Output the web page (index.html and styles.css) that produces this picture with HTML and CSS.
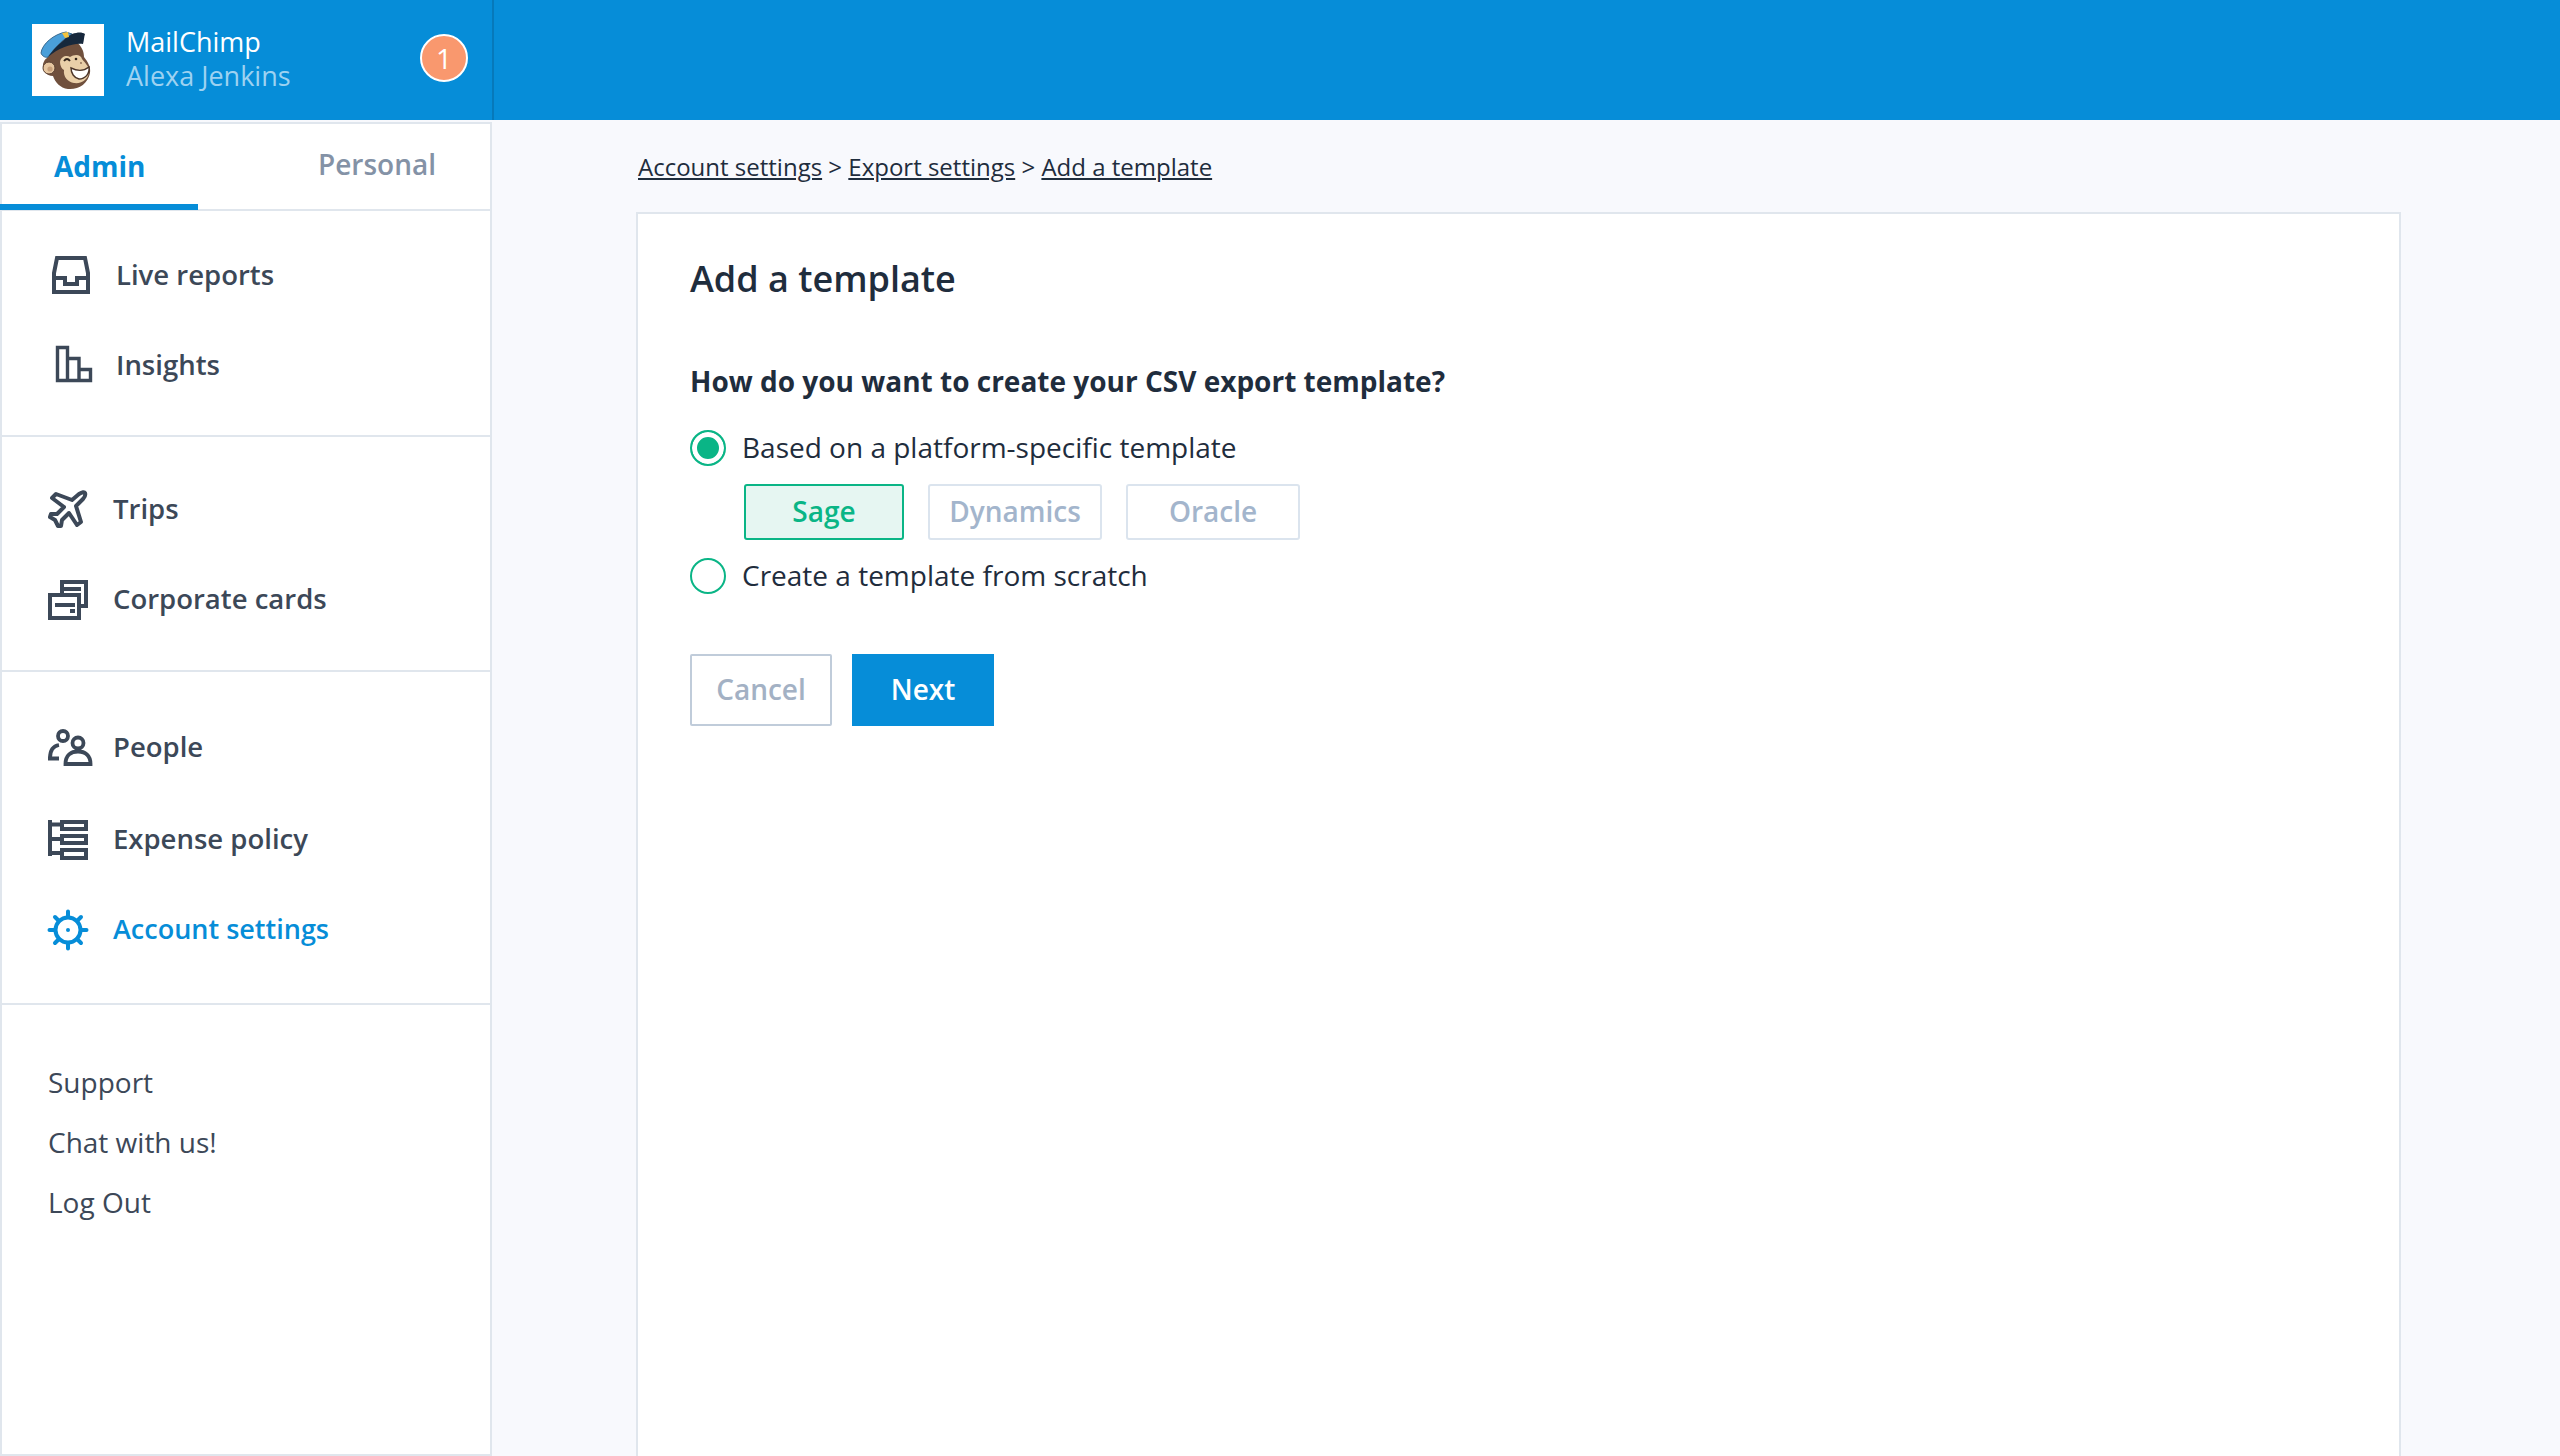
FILE: index.html
```html
<!DOCTYPE html>
<html>
<head>
  <meta charset="UTF-8">
  <title>Add a template</title>
  <link rel="stylesheet" href="styles.css">
</head>
<body>
  <header class="topbar">
    <div class="account">
      <div class="logo">
        <svg viewBox="0 0 72 72" width="72" height="72">
          <!-- head -->
          <path d="M15 34 C16 24 30 16 44 18 C50 22 52 28 52 33 C56 38 59 43 58 49 C56 60 46 66 36 65 C28 64 23 58 21 52 C14 52 10 46 11 40 C12 37 13 35 15 34 Z" fill="#70503d"/>
          <!-- ear -->
          <circle cx="17" cy="44" r="6" fill="#e6c6a0" stroke="#5b4132" stroke-width="1"/>
          <circle cx="18" cy="45" r="2.6" fill="#c79f7a"/>
          <!-- face -->
          <path d="M28 38 C29 32 35 31 38 33 C42 30 49 30 50 35 C53 39 57 42 57 47 C57 55 50 60 42 59 C36 58 31 53 32 46 C30 45 28 42 28 38 Z" fill="#e9cfa8"/>
          <!-- eye and nose -->
          <path d="M32 37 Q35 33 38 37" fill="none" stroke="#33251c" stroke-width="1.8"/>
          <circle cx="44" cy="35" r="1.3" fill="#33251c"/>
          <circle cx="49" cy="39" r="0.9" fill="#8a6a52"/>
          <!-- smile -->
          <path d="M39 44 C45 47 52 47 57 43 C58 50 53 55 47 55 C42 54 39 49 39 44 Z" fill="#fff" stroke="#4a3428" stroke-width="1.4"/>
          <!-- cap -->
          <path d="M9 29 C10 20 22 10 34 8 L40 10 C33 14 24 22 16 33 C13 34 10 32 9 29 Z" fill="#4a9fd9" stroke="#3a6a90" stroke-width="1"/>
          <path d="M16 33 C24 22 33 14 40 10 C46 8 50 8 53 10 C52 13 52 16 51 20 C40 19 27 24 16 33 Z" fill="#16283c"/>
          <path d="M30 9 L36 8 L37 13 L33 14 Z" fill="#f4c33d"/>
        </svg>
      </div>
      <div class="account-names">
        <div class="account-org">MailChimp</div>
        <div class="account-user">Alexa Jenkins</div>
      </div>
      <div class="badge">1</div>
    </div>
  </header>

  <div class="page">
    <aside class="sidebar">
      <div class="tabs">
        <div class="tab tab-active">Admin</div>
        <div class="tab tab-personal">Personal</div>
      </div>

      <nav class="nav-group group-reports">
        <a class="nav-item nav-item-wide">
          <svg class="icon" viewBox="0 0 40 40"><path d="M5 2 H33 L36 17 V36 H2 V17 Z M2 22 H13 V28 H25 V22 H36" fill="none" stroke="currentColor" stroke-width="4"/></svg>
          Live reports
        </a>
        <a class="nav-item nav-item-wide">
          <svg class="icon" viewBox="0 0 40 40"><path d="M5.5 1.5 H15.5 V34.5 H5.5 Z M15.5 12.5 H27 V34.5 M27 23.5 H38.5 V34.5 H15.5" fill="none" stroke="currentColor" stroke-width="3.4"/></svg>
          Insights
        </a>
      </nav>

      <nav class="nav-group group-trips">
        <a class="nav-item">
          <svg class="icon" viewBox="0 0 40 40"><path d="M31 4 Q36 1 37 3 Q38 6 35 9 L28 16 L33 32 L29 35 L21 23 L14 30 L13 36 L10 36 L7 30 L2 27 L3 24 L9 24 L16 17 L4 8 L8 4 L24 10 Z" fill="none" stroke="currentColor" stroke-width="4" stroke-linejoin="round"/></svg>
          Trips
        </a>
        <a class="nav-item">
          <svg class="icon" viewBox="0 0 40 40"><path d="M14 13 V2 H38 V26 H33 M2 15 H31 V38 H2 Z" fill="none" stroke="currentColor" stroke-width="4"/><path d="M15 7 H33 V11 H15 Z M7 23 H27 V27 H7 Z M22 29 H27 V33 H22 Z" fill="currentColor"/></svg>
          Corporate cards
        </a>
      </nav>

      <nav class="nav-group group-people">
        <a class="nav-item nav-item-people">
          <svg class="icon" viewBox="0 0 40 40"><circle cx="15" cy="8" r="5" fill="none" stroke="currentColor" stroke-width="3.8"/><circle cx="30" cy="15" r="5.5" fill="none" stroke="currentColor" stroke-width="3.8"/><path d="M17.5 36 C17.5 27 23 23.5 30 23.5 C37 23.5 42.5 27 42.5 36 Z" fill="none" stroke="currentColor" stroke-width="3.8"/><path d="M0 30.5 H11 M2 30 C2 23 5 18 11 17" fill="none" stroke="currentColor" stroke-width="3.8"/></svg>
          People
        </a>
        <a class="nav-item">
          <svg class="icon" viewBox="0 0 40 40"><path d="M2 0 V36 M0 4.5 H14 M0 19 H14 M0 33 H14" fill="none" stroke="currentColor" stroke-width="4"/><path d="M14 2 H38 V9 H14 Z M14 16 H38 V23 H14 Z M14 30 H38 V38 H14 Z" fill="none" stroke="currentColor" stroke-width="4"/></svg>
          Expense policy
        </a>
        <a class="nav-item nav-item-active">
          <svg class="icon" viewBox="0 0 40 40"><circle cx="20" cy="20" r="12.5" fill="none" stroke="currentColor" stroke-width="4"/><circle cx="20" cy="20" r="2" fill="currentColor"/><path d="M20 1.5 V7 M20 33 V38.5 M1.5 20 H7 M33 20 H38.5 M7 7 L11 11 M29 29 L33 33 M33 7 L29 11 M11 29 L7 33" fill="none" stroke="currentColor" stroke-width="4" stroke-linecap="round"/></svg>
          Account settings
        </a>
      </nav>

      <div class="side-links">
        <a class="side-link">Support</a>
        <a class="side-link">Chat with us!</a>
        <a class="side-link">Log Out</a>
      </div>
    </aside>

    <main class="content">
      <div class="breadcrumb">
        <a>Account settings</a> &gt; <a>Export settings</a> &gt; <a>Add a template</a>
      </div>

      <section class="card">
        <h1 class="card-title">Add a template</h1>
        <p class="question">How do you want to create your CSV export template?</p>

        <label class="radio-row radio-row-first">
          <span class="radio radio-on"></span>
          <span class="radio-text">Based on a platform-specific template</span>
        </label>
        <div class="platforms">
          <button class="platform platform-sage">Sage</button>
          <button class="platform platform-dynamics">Dynamics</button>
          <button class="platform platform-oracle">Oracle</button>
        </div>
        <label class="radio-row">
          <span class="radio"></span>
          <span class="radio-text">Create a template from scratch</span>
        </label>

        <div class="actions">
          <button class="btn btn-cancel">Cancel</button>
          <button class="btn btn-next">Next</button>
        </div>
      </section>
    </main>
  </div>
</body>
</html>
```

FILE: styles.css
```css
* {
  box-sizing: border-box;
}
html, body {
  margin: 0;
  height: 100%;
}
body {
  height: 1456px;
  overflow: hidden;
  font-family: "Open Sans", Arial, sans-serif;
  background-color: #f8f9fd;
  color: #1f2d3d;
  display: flex;
  flex-direction: column;
}
.topbar {
  height: 120px;
  flex: none;
  background-color: #068dd8;
}
.account {
  width: 494px;
  height: 120px;
  padding-left: 32px;
  border-right: 2px solid #0679ba;
  display: flex;
  align-items: center;
  position: relative;
}
.logo {
  width: 72px;
  height: 72px;
  background-color: #fff;
  flex: none;
}
.account-names {
  margin-left: 22px;
  padding-bottom: 3px;
  font-size: 27px;
  line-height: 34px;
}
.account-org {
  color: #fff;
}
.account-user {
  color: #9dd2f1;
}
.badge {
  position: absolute;
  left: 420px;
  top: 34px;
  width: 48px;
  height: 48px;
  border: 2px solid #fff;
  border-radius: 50%;
  background-color: #f9986e;
  color: #fff;
  font-size: 28px;
  line-height: 44px;
  text-align: center;
}
.page {
  flex: 1;
  display: flex;
  min-height: 0;
}
.sidebar {
  width: 492px;
  flex: none;
  margin-top: 2px;
  background-color: #fff;
  border: 2px solid #e0e6ed;
  display: flex;
  flex-direction: column;
}
.tabs {
  height: 87px;
  flex: none;
  display: flex;
  border-bottom: 2px solid #e0e6ed;
  font-size: 28px;
}
.tab {
  line-height: 80px;
}
.tab-active {
  width: 198px;
  height: 86px;
  margin-left: -2px;
  padding-left: 54px;
  color: #068dd8;
  font-weight: 700;
  line-height: 84px;
  border-bottom: 6px solid #068dd8;
}
.tab-personal {
  margin-left: 120px;
  color: #8492a6;
  font-weight: 600;
}
.nav-group {
  flex: none;
  display: flex;
  flex-direction: column;
  border-bottom: 2px solid #e0e6ed;
}
.group-reports {
  height: 226px;
  padding-top: 20px;
}
.group-trips {
  height: 235px;
  padding-top: 28px;
}
.group-people {
  height: 333px;
  padding-top: 31px;
}
.nav-item {
  height: 90px;
  flex: none;
  padding-left: 46px;
  padding-bottom: 3px;
  display: flex;
  align-items: center;
  gap: 25px;
  color: #3c4858;
  font-size: 27.5px;
  font-weight: 600;
}
.nav-item-wide {
  padding-left: 50px;
  gap: 24px;
}
.nav-item-people {
  margin-bottom: 2px;
}
.nav-item-active {
  color: #068dd8;
  font-size: 27px;
}
.icon {
  width: 40px;
  height: 40px;
  flex: none;
  margin-top: 3px;
  overflow: visible;
}
.side-links {
  padding-top: 47px;
  padding-left: 46px;
  display: flex;
  flex-direction: column;
}
.side-link {
  height: 60px;
  line-height: 60px;
  color: #3c4858;
  font-size: 28px;
}
.content {
  flex: 1;
  min-width: 0;
  padding-left: 144px;
  padding-right: 159px;
  display: flex;
  flex-direction: column;
}
.breadcrumb {
  height: 92px;
  padding-top: 30px;
  padding-left: 2px;
  flex: none;
  font-size: 24px;
  line-height: 34px;
  color: #1f2d3d;
}
.breadcrumb a {
  text-decoration: underline;
}
.card {
  flex: 1;
  padding: 40px 52px 0;
  background-color: #fff;
  border: 2px solid #e0e6ed;
  border-bottom: none;
}
.card-title {
  margin: 0;
  font-size: 36px;
  line-height: 50px;
  font-weight: 600;
}
.question {
  margin: 57px 0 0;
  font-size: 28px;
  line-height: 40px;
  font-weight: 700;
}
.radio-row {
  height: 40px;
  display: flex;
  align-items: center;
  gap: 16px;
  font-size: 28px;
}
.radio-row-first {
  margin-top: 27px;
}
.radio-text {
  padding-bottom: 2px;
}
.radio {
  width: 36px;
  height: 36px;
  flex: none;
  border: 2px solid #0ab586;
  border-radius: 50%;
  background-color: #fff;
}
.radio-on {
  background-color: #0ab586;
  box-shadow: inset 0 0 0 5px #fff;
}
.platforms {
  margin: 16px 0 16px 54px;
  display: flex;
  gap: 24px;
}
.platform {
  height: 56px;
  padding: 0 0 2px;
  font-family: inherit;
  font-size: 28px;
  font-weight: 600;
  background-color: #fff;
  border: 2px solid #dbe4ee;
  border-radius: 3px;
  color: #a3b5cc;
}
.platform-sage {
  width: 160px;
  background-color: #e6f6f2;
  border-color: #0ab586;
  color: #0ab586;
}
.platform-dynamics {
  width: 174px;
}
.platform-oracle {
  width: 174px;
}
.actions {
  margin-top: 58px;
  display: flex;
  gap: 20px;
}
.btn {
  height: 72px;
  padding: 0 0 2px;
  font-family: inherit;
  font-size: 28px;
  font-weight: 600;
  border-radius: 2px;
}
.btn-cancel {
  width: 142px;
  background-color: #fff;
  border: 2px solid #c0ccda;
  color: #a3b1c4;
}
.btn-next {
  width: 142px;
  border: none;
  border-radius: 0;
  background-color: #068dd8;
  color: #fff;
}
```
